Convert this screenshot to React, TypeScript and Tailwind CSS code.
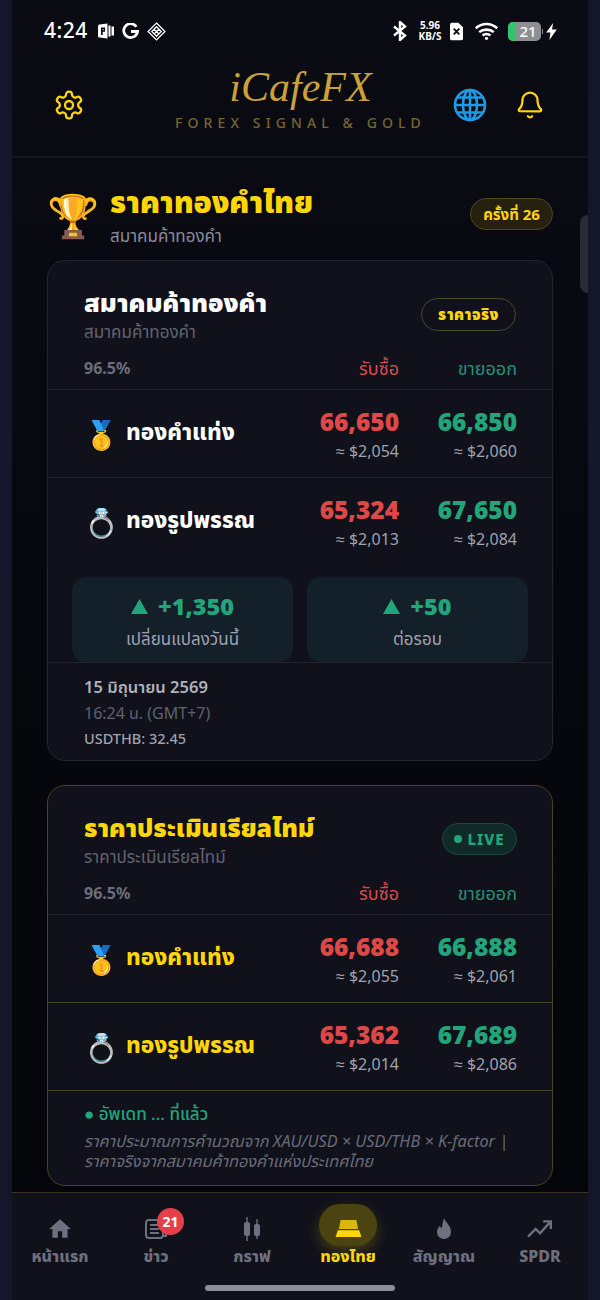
import React from "react";

const F = '"Noto Sans","Noto Sans Thai",sans-serif';

function Row({ icon, name, nameCls, buy, sell, ubuy, usell, border }: any) {
  return (
    <div className={`flex h-[88px] items-center border-t ${border} pl-[36px] pr-[35px]`}>
      <div className="flex w-[42px] justify-start text-[28px] leading-none">{icon}</div>
      <div className={`mb-[3px] flex-1 text-[22.500px] font-extrabold ${nameCls}`}>{name}</div>
      <div className="w-[100px] pt-[2px] text-right">
        <div className="text-[24.500px] font-black leading-[30px] text-[#e04848]">{buy}</div>
        <div className="mt-[2px] text-[16px] leading-[24px] text-[#a0a2ae]">≈ {ubuy}</div>
      </div>
      <div className="w-[118px] pt-[2px] text-right">
        <div className="text-[24.500px] font-black leading-[30px] text-[#22a57a]">{sell}</div>
        <div className="mt-[2px] text-[16px] leading-[24px] text-[#a0a2ae]">≈ {usell}</div>
      </div>
    </div>
  );
}

function Head() {
  return (
    <div className="flex h-[24px] items-center pl-[36px] pr-[35px] text-[18px]">
      <div className="flex-1 text-[16px] font-bold text-[#6b6d7c]">96.5%</div>
      <div className="w-[100px] text-right text-[#d84a50]">รับซื้อ</div>
      <div className="w-[118px] text-right text-[#259273]">ขายออก</div>
    </div>
  );
}

function Stat({ v, l }: any) {
  return (
    <div className="flex h-[85px] flex-1 flex-col items-center rounded-[14px] bg-[#131f29] pt-[13px]">
      <div className="flex items-center gap-[10px] text-[23.500px] font-black leading-[32px] text-[#22a57a]">
        <svg width="17" height="15" viewBox="0 0 17 15"><path d="M8.500 0L17 15H0z" fill="#22a57a" /></svg>
        <span>{v}</span>
      </div>
      <div className="text-[17px] leading-[33px] text-[#a0a2ae]">{l}</div>
    </div>
  );
}

function Tab({ label, active, children, badge }: any) {
  return (
    <div className="relative flex w-[96px] flex-col items-center">
      <div className="flex h-[32px] items-center justify-center">{children}</div>
      <div className={`relative text-[16px] font-extrabold leading-[22px] ${active ? "text-[#ffd60a]" : "text-[#6e7080]"}`}>{label}</div>
      {badge && (
        <div className="absolute left-[49px] top-[-5px] flex h-[27px] w-[27px] items-center justify-center rounded-full bg-[#e5404a] text-[14px] font-bold text-white">{badge}</div>
      )}
    </div>
  );
}

export default function App() {
  return (
    <div className="h-[1300px] w-[600px] overflow-hidden bg-[#14162a]" style={{ fontFamily: F }}>
      <div className="relative mx-[12px] flex h-[1300px] w-[576px] flex-col bg-linear-to-b from-[#0a0b13] to-[#040509]">
        {/* status bar */}
        <div className="flex h-[50px] items-center pl-[32px] pr-[31px] pt-[12px] text-white">
          <span className="text-[21px] font-medium tracking-[0.500px]">4:24</span>
          <svg className="ml-[10px]" width="16" height="16" viewBox="0 0 16 16" fill="white">
            <path d="M1.500 1.500 9.500 0.500v15l-8-1a1.500 1.500 0 0 1-1.500-1.500V3a1.500 1.500 0 0 1 1.500-1.500z" /><path d="M10.500 2.500h2v11h-2zM13.500 3.500h2.500v9h-2.500z" />
            <path d="M3 4.500h4v4.200H4.700V12H3z" fill="#0a0b13" /><path d="M4.700 6h.9v1.300h-.9z" fill="white" />
          </svg>
          <svg className="ml-[8px]" width="17" height="17" viewBox="0 0 16 16" fill="none" stroke="white" strokeWidth="2.600">
            <path d="M13.500 3.500A6.500 6.500 0 1 0 14.600 8H8.500" />
          </svg>
          <svg className="ml-[8px]" width="19" height="19" viewBox="0 0 18 18" fill="none" stroke="white" strokeWidth="1.200">
            <path d="M9 1l8 8-8 8-8-8z" />
            <path d="M9 4.500L13.500 9 9 13.500 4.500 9zM6.700 6.800l4.600 4.600M11.300 6.800l-4.600 4.600" />
          </svg>
          <div className="flex-1" />
          <svg width="14" height="20" viewBox="0 0 14 20" fill="none" stroke="white" strokeWidth="2.400">
            <path d="M1 5.500l11 9L7 19V1l5 4.500-11 9" />
          </svg>
          <div className="ml-[10px] w-[26px] text-center text-[10px] font-bold leading-[11px] whitespace-nowrap"><div>5.96</div><div>KB/S</div></div>
          <svg className="ml-[7px]" width="13" height="19" viewBox="0 0 14 19">
            <path d="M2 0h7l5 5v12a2 2 0 0 1-2 2H2a2 2 0 0 1-2-2V2a2 2 0 0 1 2-2z" fill="white" />
            <path d="M4 6.500l6 6M10 6.500l-6 6" stroke="#0a0b13" strokeWidth="2" />
          </svg>
          <svg className="ml-[11px]" width="25" height="18" viewBox="0 0 21 16" fill="none" stroke="white" strokeWidth="2.300">
            <path d="M1 5.500c5.500-5 13.500-5 19 0M4 9c3.500-3 9.500-3 13 0M7 12c2-1.500 5-1.500 7 0" />
            <circle cx="10.500" cy="14.500" r="1.400" fill="white" stroke="none" />
          </svg>
          <div className="ml-[9px] flex h-[19px] w-[33px] items-center rounded-[5px] bg-[#8e8f94]">
            <div className="h-full w-[7px] rounded-l-[5px] bg-[#2fc56b]" />
            <div className="flex-1 text-center text-[15px] font-medium leading-[19px]">21</div>
          </div>
          <div className="ml-[1px] h-[5px] w-[1px] bg-[#8e8f94]" />
          <svg className="ml-[3px]" width="11" height="17" viewBox="0 0 10 16" fill="white"><path d="M6.500 0L0 9h4L3 16l7-10H5.500z" /></svg>
        </div>

        {/* header */}
        <div className="relative flex h-[108px] items-center border-b-2 border-[#16171f] pl-[41px] pr-[43px]">
          <div className="mt-[4px] w-[95px]">
            <svg width="32" height="32" viewBox="0 0 24 24" fill="none" stroke="#ffd60a" strokeWidth="1.700" strokeLinecap="round" strokeLinejoin="round">
              <path d="M12.220 2h-.44a2 2 0 0 0-2 2v.180a2 2 0 0 1-1 1.730l-.43.250a2 2 0 0 1-2 0l-.150-.080a2 2 0 0 0-2.730.730l-.220.380a2 2 0 0 0 .730 2.730l.150.100a2 2 0 0 1 1 1.720v.510a2 2 0 0 1-1 1.740l-.150.090a2 2 0 0 0-.730 2.730l.220.380a2 2 0 0 0 2.730.730l.150-.080a2 2 0 0 1 2 0l.430.250a2 2 0 0 1 1 1.730V20a2 2 0 0 0 2 2h.440a2 2 0 0 0 2-2v-.180a2 2 0 0 1 1-1.730l.430-.250a2 2 0 0 1 2 0l.150.080a2 2 0 0 0 2.730-.730l.220-.390a2 2 0 0 0-.730-2.730l-.150-.080a2 2 0 0 1-1-1.740v-.500a2 2 0 0 1 1-1.740l.150-.090a2 2 0 0 0 .730-2.730l-.220-.380a2 2 0 0 0-2.730-.730l-.150.080a2 2 0 0 1-2 0l-.430-.250a2 2 0 0 1-1-1.730V4a2 2 0 0 0-2-2z" />
              <circle cx="12" cy="12" r="3" />
            </svg>
          </div>
          <div className="mb-[10px] flex flex-1 flex-col items-center">
            <div className="h-[46px] text-[42px] leading-[46px] text-[#c9a23a]" style={{ fontFamily: '"Liberation Serif",serif', fontStyle: "italic" }}>iCafeFX</div>
            <div className="mt-[2px] text-[14px] font-medium tracking-[5.100px] text-[#77652f]">FOREX SIGNAL &amp; GOLD</div>
          </div>
          <svg className="mt-[4px]" width="34" height="34" viewBox="0 0 34 34" fill="none" stroke="#1c9be8" strokeWidth="2.600">
            <circle cx="17" cy="17" r="15" /><ellipse cx="17" cy="17" rx="7" ry="15" />
            <path d="M17 2v30M2 17h30M4.500 9.500h25M4.500 24.500h25" />
          </svg>
          <svg className="ml-[28px] mt-[3px]" width="30" height="32" viewBox="0 0 24 24" fill="none" stroke="#ffd60a" strokeWidth="1.800" strokeLinecap="round" strokeLinejoin="round">
            <path d="M10.300 21a2 2 0 0 0 3.400 0" />
            <path d="M3.300 15.300A1 1 0 0 0 4 17h16a1 1 0 0 0 .7-1.700C19.400 14 18 12.500 18 8A6 6 0 0 0 6 8c0 4.500-1.400 6-2.700 7.300" />
          </svg>
        </div>

        {/* title */}
        <div className="flex h-[102px] items-start pl-[35px] pr-[35px] pt-[25px]">
          <div className="mt-[7px] w-[63px] text-[42px] leading-[50px]">🏆</div>
          <div className="flex-1">
            <div className="text-[30px] font-black leading-[38px] text-[#ffd60a]">ราคาทองคำไทย</div>
            <div className="mt-[3px] text-[17px] leading-[24px] text-[#8a8c9a]">สมาคมค้าทองคำ</div>
          </div>
          <div className="mt-[15px] flex h-[32px] w-[83px] items-center justify-center rounded-full border border-[#51451c] bg-[#26210f] text-[15px] font-bold text-[#ffd60a]">ครั้งที่ 26</div>
        </div>

        {/* card 1 */}
        <div className="mx-[35px] flex h-[501px] flex-col overflow-hidden rounded-[18px] border border-[#24262f] bg-[#10111b]">
          <div className="flex h-[95px] items-start pl-[36px] pr-[36px] pt-[25px]">
            <div className="flex-1">
              <div className="text-[25.500px] font-black leading-[32px] text-white">สมาคมค้าทองคำ</div>
              <div className="mt-[2px] text-[17px] leading-[24px] text-[#626471]">สมาคมค้าทองคำ</div>
            </div>
            <div className="mt-[12px] flex h-[33px] w-[95px] items-center justify-center rounded-full border border-[#4e4530] text-[15px] font-black tracking-[0.500px] text-[#ffd60a]">ราคาจริง</div>
          </div>
          <Head />
          <div className="h-[9px]" />
          <Row icon="🥇" name="ทองคำแท่ง" nameCls="text-white" buy="66,650" sell="66,850" ubuy="$2,054" usell="$2,060" border="border-[#20222c]" />
          <Row icon="💍" name="ทองรูปพรรณ" nameCls="text-white" buy="65,324" sell="67,650" ubuy="$2,013" usell="$2,084" border="border-[#20222c]" />
          <div className="mt-[12px] flex gap-[14px] pl-[24px] pr-[24px]">
            <Stat v="+1,350" l="เปลี่ยนแปลงวันนี้" />
            <Stat v="+50" l="ต่อรอบ" />
          </div>
          <div className="border-t border-[#20222c] pl-[36px] pt-[12px]">
            <div className="text-[16.500px] font-semibold leading-[24px] text-[#b0b2bc]">15 มิถุนายน 2569</div>
            <div className="text-[16px] leading-[28px] text-[#5f616e]">16:24 น. (GMT+7)</div>
            <div className="text-[14.500px] font-medium leading-[22px] text-[#a0a2ae]">USDTHB: 32.45</div>
          </div>
        </div>

        {/* card 2 */}
        <div className="mx-[35px] mt-[24px] flex h-[401px] flex-col overflow-hidden rounded-[18px] border border-[#4b4022] bg-[#10111b]">
          <div className="flex h-[95px] items-start pl-[36px] pr-[35px] pt-[25px]">
            <div className="flex-1">
              <div className="text-[25px] font-black leading-[32px] text-[#ffd60a]">ราคาประเมินเรียลไทม์</div>
              <div className="mt-[2px] text-[17px] leading-[24px] text-[#626471]">ราคาประเมินเรียลไทม์</div>
            </div>
            <div className="mt-[12px] flex h-[32px] w-[75px] items-center justify-center gap-[5px] rounded-full border border-[#1c4a3f] bg-[#0f2a27] text-[15px] font-extrabold tracking-[1px] text-[#22a57a]">
              <span className="h-[8px] w-[8px] rounded-full bg-[#22a57a]" />LIVE
            </div>
          </div>
          <Head />
          <div className="h-[9px]" />
          <Row icon="🥇" name="ทองคำแท่ง" nameCls="text-[#ffd60a]" buy="66,688" sell="66,888" ubuy="$2,055" usell="$2,061" border="border-[#20222c]" />
          <Row icon="💍" name="ทองรูปพรรณ" nameCls="text-[#ffd60a]" buy="65,362" sell="67,689" ubuy="$2,014" usell="$2,086" border="border-[#4b4022]" />
          <div className="border-t border-[#4b4022] pl-[36px] pt-[11px]">
            <div className="text-[17px] font-medium leading-[24px] text-[#22a57a]">● อัพเดท ... ที่แล้ว</div>
            <div className="mt-[5px] whitespace-nowrap text-[16.300px] italic leading-[20px] text-[#6a6c79]">
              ราคาประมาณการคำนวณจาก XAU/USD × USD/THB × K-factor |<br />ราคาจริงจากสมาคมค้าทองคำแห่งประเทศไทย
            </div>
          </div>
        </div>

        {/* scroll handle */}
        <div className="absolute right-0 top-[215px] h-[78px] w-[8px] rounded-l-[8px] bg-[#2a2b33]" />

        {/* bottom nav */}
        <div className="absolute bottom-0 left-0 flex h-[108px] w-[576px] border-t border-[#3a3320] bg-[#10111b] pt-[20px]">
          <Tab label="หน้าแรก">
            <svg width="26" height="26" viewBox="0 0 24 24" fill="#6e7080"><path d="M10 20v-6h4v6h5v-8h3L12 3 2 12h3v8z" /></svg>
          </Tab>
          <Tab label="ข่าว" badge="21">
            <svg width="24" height="24" viewBox="0 0 24 24" fill="none" stroke="#6e7080" strokeWidth="2"><rect x="2" y="3" width="17" height="18" rx="3" /><path d="M6 8h9M6 12h9M6 16h9M19 7h3v12h-3" /></svg>
          </Tab>
          <Tab label="กราฟ">
            <svg width="20" height="26" viewBox="0 0 20 26" fill="#6e7080"><rect x="2" y="6" width="6" height="14" rx="2" /><rect x="4.300" y="1" width="1.400" height="24" /><rect x="12" y="8" width="6" height="12" rx="2" /><rect x="14.300" y="3" width="1.400" height="20" /></svg>
          </Tab>
          <Tab label="ทองไทย" active>
            <div className="absolute top-[-9px] h-[42px] w-[58px] rounded-full bg-[#4c4410] shadow-[0_6px_14px_rgba(255,214,10,0.22)]" />
            <svg className="relative" width="27" height="18" viewBox="0 0 24 16" fill="#ffd60a"><path d="M5 0h14l1.500 8h-17z" opacity="0.800" /><path d="M2.500 9h19l2 6H.500z" /></svg>
          </Tab>
          <Tab label="สัญญาณ">
            <svg width="18" height="24" viewBox="0 0 18 24" fill="#6e7080"><path d="M9 1c1 4 7 7 7 14a7 7 0 0 1-14 0c0-3 1.500-4.500 2.500-6 1 1 1.500 1.500 2 2.500C7.500 8 8 4 9 1z" /></svg>
          </Tab>
          <Tab label="SPDR">
            <svg width="26" height="26" viewBox="0 0 24 24" fill="none" stroke="#6e7080" strokeWidth="2.200"><path d="M1 19l7-7 4 4 10-11M15 5h7v7" /></svg>
          </Tab>
          <div className="absolute bottom-[9px] left-[193px] h-[6px] w-[190px] rounded-full bg-[#8e8f94]" />
        </div>
      </div>
    </div>
  );
}
